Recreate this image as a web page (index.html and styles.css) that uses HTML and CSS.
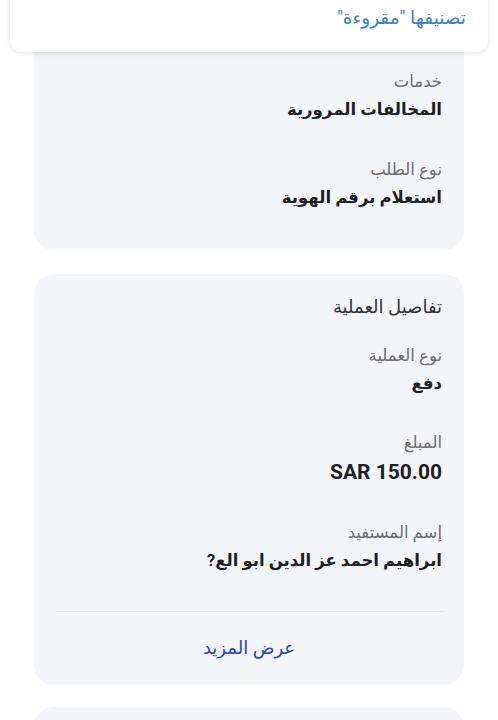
FILE: index.html
```html
<!DOCTYPE html>
<html lang="ar" dir="rtl">
<head>
    <meta charset="UTF-8">
    <meta name="viewport" content="width=device-width, initial-scale=1.0">
    <title>تفاصيل العملية</title>
    <link rel="stylesheet" href="styles.css">
</head>
<body>
    <div class="toast">
        <span class="toast-text">تصنيفها "مقروءة"</span>
    </div>
    <div class="page">
        <div class="card card-request">
            <div class="field">
                <div class="label">خدمات</div>
                <div class="value">المخالفات المرورية</div>
            </div>
            <div class="field">
                <div class="label">نوع الطلب</div>
                <div class="value">استعلام برقم الهوية</div>
            </div>
        </div>
        <div class="card card-details">
            <div class="card-title">تفاصيل العملية</div>
            <div class="field">
                <div class="label">نوع العملية</div>
                <div class="value">دفع</div>
            </div>
            <div class="field">
                <div class="label">المبلغ</div>
                <div class="value amount" dir="ltr">SAR 150.00</div>
            </div>
            <div class="field">
                <div class="label">إسم المستفيد</div>
                <div class="value">ابراهيم احمد عز الدين ابو الع?</div>
            </div>
            <div class="divider"></div>
            <button class="more">عرض المزيد</button>
        </div>
        <div class="card card-next"></div>
    </div>
</body>
</html>
```

FILE: styles.css
```css
body {
    margin: 0;
    background-color: #ffffff;
    font-family: Roboto, "DejaVu Sans", sans-serif;
    color: #1f1f1f;
    overflow: hidden;
}
.toast {
    position: absolute;
    top: -40px;
    left: 10px;
    right: 10px;
    height: 92px;
    background-color: #ffffff;
    border-radius: 12px;
    box-shadow: 0 1px 5px rgba(0,0,0,0.13);
    z-index: 2;
    box-sizing: border-box;
    padding: 0 22px 0 0;
    display: flex;
    align-items: flex-end;
}
.toast-text {
    color: #3f7fc2;
    font-size: 18.5px;
    line-height: 28px;
    margin-bottom: 20px;
}
.page {
    padding: 0 34px;
}
.card {
    background-color: #f4f5f9;
    border-radius: 20px;
    padding: 0 22px;
    display: flex;
    flex-direction: column;
}
.card-request {
    height: 250px;
    box-sizing: border-box;
    padding-top: 68px;
    border-radius: 0 0 20px 20px;
    gap: 32px;
}
.card-details {
    margin-top: 24px;
    padding-top: 19px;
    padding-bottom: 23px;
}
.card-next {
    margin-top: 22px;
    height: 60px;
}
.card-title {
    font-size: 18px;
    line-height: 28px;
    color: #333333;
    margin-bottom: 21px;
}
.card-details .field + .field {
    margin-top: 31px;
}
.label {
    font-size: 16.5px;
    line-height: 27px;
    color: #6e6e6e;
}
.value {
    font-size: 16.5px;
    font-weight: bold;
    line-height: 29px;
    color: #1f1f1f;
}
.amount {
    font-size: 21px;
    text-align: right;
    line-height: 31px;
    margin-top: 1px;
}
.divider {
    height: 1px;
    background-color: #e3e5ea;
    margin: 36px -2px 0 0;
}
.more {
    margin-top: 22px;
    background: none;
    border: none;
    padding: 0;
    font-family: inherit;
    font-size: 18px;
    line-height: 28px;
    color: #2a44b8;
    cursor: pointer;
}
```
